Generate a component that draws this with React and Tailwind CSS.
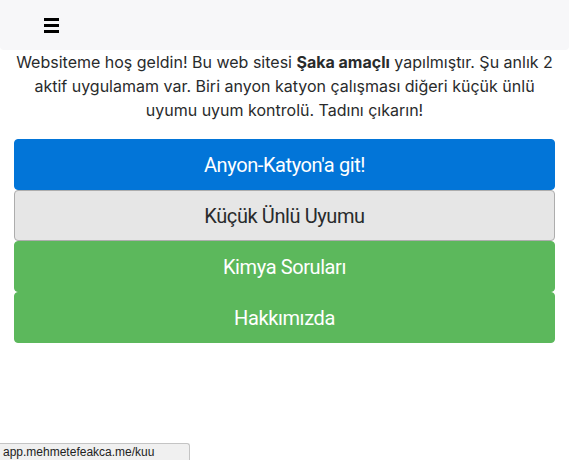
import React from "react";

export default function App() {
  const font = { fontFamily: "Inter, 'Noto Sans', sans-serif" };
  return (
    <div className="relative w-[569px] h-[460px] bg-white text-[#292b2c] overflow-hidden" style={font}>
      {/* navbar */}
      <div className="h-[50px] bg-[#f7f7f9] rounded-b-[4px] flex items-center pl-[44px]">
        <div className="flex flex-col gap-[3px] w-[15px]">
          <span className="block h-[3px] bg-black" />
          <span className="block h-[3px] bg-black" />
          <span className="block h-[3px] bg-black" />
        </div>
      </div>

      <p className="text-center text-[16px] leading-[24px] px-[10px]">
        Websiteme hoş geldin! Bu web sitesi <b className="font-bold">Şaka amaçlı</b> yapılmıştır. Şu anlık 2
        aktif uygulamam var. Biri anyon katyon çalışması diğeri küçük ünlü uyumu uyum kontrolü. Tadını çıkarın!
      </p>

      <div
        className="mx-[14px] mt-[17px] flex flex-col text-[20px] tracking-[-0.4px]"
        style={{ fontFamily: "Roboto, 'Noto Sans', sans-serif" }}
      >
        <button className="h-[51px] bg-[#0275d8] text-white rounded-[4px] border border-[#0275d8]">
          Anyon-Katyon'a git!
        </button>
        <button className="h-[51px] bg-[#e6e6e6] text-[#292b2c] rounded-[4px] border border-[#adadad]">
          Küçük Ünlü Uyumu
        </button>
        <button className="h-[51px] bg-[#5cb85c] text-white rounded-[4px] border border-[#5cb85c]">
          Kimya Soruları
        </button>
        <button className="h-[51px] bg-[#5cb85c] text-white rounded-[4px] border border-[#5cb85c]">
          Hakkımızda
        </button>
      </div>

      {/* status bar */}
      <div
        className="absolute left-0 bottom-0 w-[190px] h-[17px] bg-[#f0f0f0] border-t border-r border-[#c4c4c4] rounded-tr-[3px] pl-[3px] text-[12px] leading-[16px] text-[#222]"
        style={{ fontFamily: "'Liberation Sans', sans-serif" }}
      >
        app.mehmetefeakca.me/kuu
      </div>
    </div>
  );
}
